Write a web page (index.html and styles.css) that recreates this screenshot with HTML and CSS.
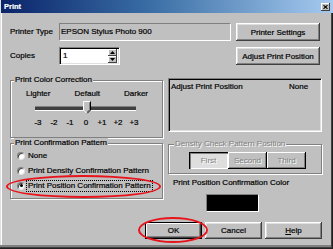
FILE: index.html
```html
<!DOCTYPE html>
<html lang="en">

<head>
    <meta charset="UTF-8">
    <meta name="viewport" content="width=device-width, initial-scale=1.0">
    <title>Print</title>
    <link rel="stylesheet" href="styles.css">
</head>

<body>

    <div class="window">
        <!-- Title bar -->
        <div class="titlebar">
            <span class="title">Print</span>
            <span class="close-btn">
                <svg width="5" height="4" viewBox="0 0 5 4"><path d="M0.5 0.2 L4.5 3.8 M4.5 0.2 L0.5 3.8" stroke="#000" stroke-width="1.1"/></svg>
            </span>
        </div>

        <div class="content">
            <div class="row">
                <span class="field-label">Printer Type</span>
                <div class="readonly-box">EPSON Stylus Photo 900</div>
                <button class="btn btn-side">Printer Settings</button>
            </div>

            <div class="row">
                <span class="field-label">Copies</span>
                <div class="spin-box">
                    <span class="spin-value">1</span>
                    <div class="spin-buttons">
                        <span class="spin-btn"><svg width="5" height="3" viewBox="0 0 5 3"><polygon points="2.5,0 5,3 0,3" fill="#000"/></svg></span>
                        <span class="spin-btn"><svg width="5" height="3" viewBox="0 0 5 3"><polygon points="0,0 5,0 2.5,3" fill="#000"/></svg></span>
                    </div>
                </div>
                <button class="btn btn-side">Adjust Print Position</button>
            </div>

            <div class="columns">
                <!-- Left column -->
                <div class="col">
                    <div class="group group-color">
                        <span class="legend">Print Color Correction</span>
                        <div class="scale-labels">
                            <span>Lighter</span>
                            <span>Default</span>
                            <span>Darker</span>
                        </div>
                        <div class="slider">
                            <svg class="thumb" width="8" height="13" viewBox="0 0 8 13">
                                <polygon points="0,0 8,0 8,9 4,13 0,9" fill="#c0c0c0"/>
                                <polyline points="0.5,9 0.5,0.5 7.5,0.5" fill="none" stroke="#fff"/>
                                <polyline points="7.5,0.5 7.5,9 4,12.5" fill="none" stroke="#000"/>
                                <polyline points="0.5,9 4,12.5" fill="none" stroke="#fff"/>
                                <polyline points="6.5,1.5 6.5,8.6 4,11" fill="none" stroke="#808080"/>
                            </svg>
                        </div>
                        <div class="ticks">
                            <span>-3</span><span>-2</span><span>-1</span><span>0</span><span>+1</span><span>+2</span><span>+3</span>
                        </div>
                    </div>

                    <div class="group group-pattern">
                        <span class="legend">Print Confirmation Pattern</span>
                        <div class="radio-row"><span class="radio"></span><span class="radio-text">None</span></div>
                        <div class="radio-row"><span class="radio"></span><span class="radio-text">Print Density Confirmation Pattern</span></div>
                        <div class="radio-row"><span class="radio checked"></span><span class="radio-text focused">Print Position Confirmation Pattern</span></div>
                    </div>
                </div>

                <!-- Right column -->
                <div class="col">
                    <div class="status-box">
                        <span class="status-name">Adjust Print Position</span>
                        <span>None</span>
                    </div>

                    <div class="group group-density">
                        <span class="legend disabled-text">Density Check Pattern Position</span>
                        <div class="segments">
                            <span class="segment pressed disabled-text">First</span>
                            <span class="segment disabled-text">Second</span>
                            <span class="segment disabled-text">Third</span>
                        </div>
                    </div>

                    <div class="color-label">Print Position Confirmation Color</div>
                    <div class="swatch"></div>
                </div>
            </div>

            <div class="dialog-buttons">
                <button class="btn btn-dialog btn-default">OK</button>
                <button class="btn btn-dialog">Cancel</button>
                <button class="btn btn-dialog"><u>H</u>elp</button>
            </div>
        </div>

        <!-- red annotation marks -->
        <div class="mark mark-radio"></div>
        <div class="mark mark-ok"></div>
    </div>

</body>

</html>
```

FILE: styles.css
```css
* {
    box-sizing: border-box;
}

body {
    margin: 0;
    background-color: #c0c0c0;
    font-family: 'Liberation Sans', Arial, sans-serif;
    font-size: 8px;
    line-height: 10px;
    color: #000;
    -webkit-text-stroke: 0.2px;
}

.window {
    position: relative;
    width: 333px;
    height: 249px;
    overflow: hidden;
    background-color: #c0c0c0;
    box-shadow: inset -1px -1px #202020, inset -2px -2px #404040, inset 0 -4px #808080,
        inset 1px 0 #dfdfdf, inset 2px 0 #fff;
}

/* Title bar */
.titlebar {
    display: flex;
    align-items: center;
    justify-content: space-between;
    height: 13px;
    margin-left: 1px;
    padding: 0 3px 0 3px;
    background: linear-gradient(to right, #0a246a, #3a6ea5 45%, #a6caf0);
}

.title {
    color: #fff;
    font-weight: bold;
    font-size: 7.5px;
}

.close-btn {
    display: flex;
    align-items: center;
    justify-content: center;
    width: 9px;
    height: 8px;
    background-color: #c0c0c0;
    box-shadow: inset -1px -1px #404040, inset 1px 1px #fff;
}

.content {
    padding: 10px 11px 0 10px;
}

/* Top rows */
.row {
    display: flex;
    align-items: center;
    height: 18px;
}

.row + .row {
    margin-top: 6px;
}

.field-label {
    width: 49px;
}

.readonly-box {
    display: flex;
    align-items: center;
    width: 172px;
    height: 18px;
    padding-left: 1px;
    border: 1px solid;
    border-color: #808080 #fff #fff #808080;
}

.spin-box {
    display: flex;
    align-items: center;
    width: 61px;
    height: 18px;
    padding: 0 1px 0 1px;
    background-color: #fff;
    border: 1px solid;
    border-color: #808080 #fff #fff #808080;
    box-shadow: inset 1px 1px #000, inset -1px -1px #dfdfdf;
}

.spin-value {
    flex: 1;
    padding-left: 2px;
}

.spin-buttons {
    display: flex;
    flex-direction: column;
    width: 9px;
    margin-right: 1px;
}

.spin-btn {
    display: flex;
    align-items: center;
    justify-content: center;
    height: 7px;
    background-color: #c0c0c0;
    box-shadow: inset -1px -1px #404040, inset 1px 1px #fff;
}

/* Buttons */
.btn {
    height: 18px;
    padding: 0;
    border: 0;
    background-color: #c0c0c0;
    font-family: inherit;
    font-size: 8px;
    color: #000;
    -webkit-text-stroke: 0.2px;
    box-shadow: inset -1px -1px #404040, inset 1px 1px #fff, inset -2px -2px #808080, inset 2px 2px #dfdfdf;
}

.btn-side {
    width: 84px;
    margin-left: auto;
    margin-right: 2px;
}

/* Columns */
.columns {
    display: grid;
    grid-template-columns: 153px 154px;
    column-gap: 5px;
    margin-top: 10px;
}

.group {
    position: relative;
    border: 1px solid #808080;
    box-shadow: inset 1px 1px #fff, 1px 1px #fff;
}

.legend {
    position: absolute;
    top: -6px;
    left: 3px;
    padding: 0 1px;
    background-color: #c0c0c0;
    white-space: nowrap;
}

.group-color {
    margin-top: 5px;
    padding: 8px 0 9px 0;
}

.scale-labels {
    display: flex;
    justify-content: space-between;
    padding: 0 14px 0 15px;
}

.slider {
    position: relative;
    display: flex;
    justify-content: center;
    height: 14px;
    margin: 1px 26px 0 24px;
}

.slider::before {
    content: '';
    position: absolute;
    left: 0;
    right: 0;
    top: 6px;
    height: 3px;
    border-top: 1px solid #808080;
    border-bottom: 1px solid #fff;
    background-color: #404040;
}

.thumb {
    position: relative;
    margin-top: 1px;
    margin-left: 3px;
}

.ticks {
    display: flex;
    margin-top: 4px;
    padding-left: 19px;
}

.ticks span {
    width: 16px;
    text-align: center;
}

.group-pattern {
    margin-top: 5px;
    padding: 4px 0 5px 6px;
}

.radio-row {
    display: flex;
    align-items: center;
    gap: 2px;
    height: 15px;
}

.radio {
    display: flex;
    align-items: center;
    justify-content: center;
    width: 8px;
    height: 8px;
    border-radius: 50%;
    background-color: #fff;
    border: 1px solid;
    border-color: #808080 #dfdfdf #dfdfdf #808080;
    box-shadow: inset 1px 1px #404040;
}

.radio.checked::after {
    content: '';
    width: 3px;
    height: 3px;
    border-radius: 50%;
    background-color: #000;
}

.radio-text {
    padding: 0 1px;
}

.radio-text.focused {
    outline: 1px dotted #000;
}

/* Right column */
.status-box {
    display: flex;
    height: 54px;
    margin-top: 3px;
    padding: 3px 0 0 2px;
    border: 1px solid;
    border-color: #808080 #fff #fff #808080;
    box-shadow: inset 1px 1px #000, inset -1px -1px #dfdfdf;
}

.status-name {
    width: 118px;
}

.group-density {
    margin-top: 12px;
    padding: 7px 0 4px 20px;
}

.group-density .legend {
    left: 5px;
}

.disabled-text {
    color: #808080;
    text-shadow: 1px 1px 0 #fff;
    -webkit-text-stroke: 0;
}

.segments {
    display: flex;
}

.segment {
    display: flex;
    align-items: center;
    justify-content: center;
    width: 39px;
    height: 17px;
    background-color: #c0c0c0;
    box-shadow: inset -1px -1px #000, inset 1px 1px #fff, inset -2px -2px #808080;
}

.segment.pressed {
    background-color: #dedede;
    box-shadow: inset 1px 1px #000, inset 2px 2px #808080, inset -1px -1px #fff;
}

.color-label {
    margin-top: 4px;
    padding-left: 5px;
}

.swatch {
    width: 53px;
    height: 18px;
    margin: 6px 0 0 38px;
    background-color: #000;
    border: 1px solid;
    border-color: #808080 #fff #fff #808080;
}

/* Bottom buttons */
.dialog-buttons {
    display: flex;
    justify-content: flex-end;
    gap: 3px;
    margin-top: 10px;
}

.btn-dialog {
    width: 57px;
    height: 17px;
}

.btn-default {
    box-shadow: inset 0 0 0 1px #000, inset -2px -2px #404040, inset 2px 2px #fff, inset -3px -3px #808080;
}

/* Red annotation ellipses */
.mark {
    position: absolute;
    border: 2px solid #e8141c;
    border-radius: 50%;
}

.mark-radio {
    left: 6px;
    top: 175px;
    width: 155px;
    height: 23px;
}

.mark-ok {
    left: 138px;
    top: 217px;
    width: 70px;
    height: 26px;
}
```
